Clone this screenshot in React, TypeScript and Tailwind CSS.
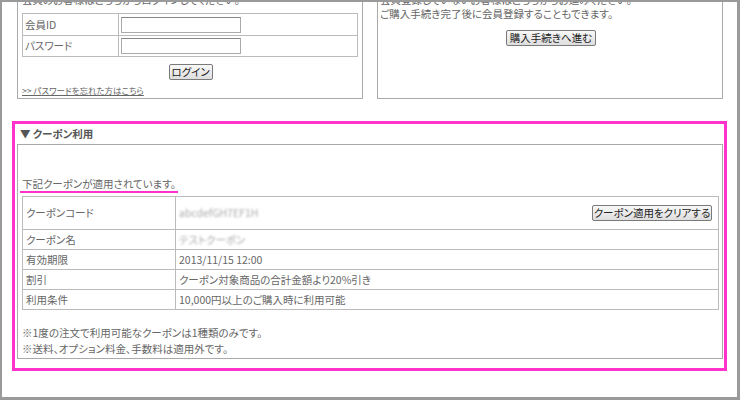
import React from "react";

const font = "font-['Noto_Sans_CJK_JP','Noto_Sans',sans-serif] [font-feature-settings:'palt']";

const OldButton = ({ label, className }: { label: string; className?: string }) => (
    <button className={`h-[16px] leading-[14px] border border-[#7a7a7a] rounded-[2px] bg-gradient-to-b from-[#f8f8f8] to-[#dedede] text-[10.5px] text-[#222] ${className ?? ""}`}>
        {label}
    </button>
);

const LoginBox = () => (
    <div className="w-[346px] h-[120px] border border-[#aaa] pl-[4px] pr-[3px] pt-[13px]">
        <p className="text-[10.5px] leading-[14px] text-[#666]">会員のお客様はこちらからログインしてください。</p>
        <table className="mt-[6px] w-[336px] border-collapse border border-[#aaa] text-[10.5px] text-[#666]">
            <tbody>
                <tr className="h-[22px]">
                    <td className="w-[96px] border border-[#bbb] pl-[2px]">会員ID</td>
                    <td className="border border-[#bbb] pl-[2px]">
                        <div className="w-[120px] h-[16px] border border-[#aaa] border-t-[#888] bg-white" />
                    </td>
                </tr>
                <tr className="h-[21px]">
                    <td className="border border-[#bbb] pl-[2px]">パスワード</td>
                    <td className="border border-[#bbb] pl-[2px]">
                        <div className="w-[120px] h-[16px] border border-[#aaa] border-t-[#888] bg-white" />
                    </td>
                </tr>
            </tbody>
        </table>
        <div className="flex justify-center mt-[7px]">
            <OldButton label="ログイン" className="w-[44px] h-[15px]" />
        </div>
        <a className="block mt-[4px] text-[8.5px] leading-[12px] text-[#666] underline">&gt;&gt; パスワードを忘れた方はこちら</a>
    </div>
);

const GuestBox = () => (
    <div className="w-[346px] h-[120px] border border-[#aaa] pl-[2px] pt-[13px]">
        <p className="text-[10.5px] leading-[14px] text-[#666]">会員登録していないお客様はこちらからお進みください。</p>
        <p className="text-[10.5px] leading-[14px] text-[#666]">ご購入手続き完了後に会員登録することもできます。</p>
        <div className="flex justify-center mt-[9px]">
            <OldButton label="購入手続きへ進む" className="w-[90px]" />
        </div>
    </div>
);

const couponRows = [
    { label: "クーポン名", value: <span className="blur-[1px] text-[#aaa]">テストクーポン</span> },
    { label: "有効期限", value: "2013/11/15 12:00" },
    { label: "割引", value: "クーポン対象商品の合計金額より20%引き" },
    { label: "利用条件", value: "10,000円以上のご購入時に利用可能" },
];

const CouponSection = () => (
    <div className="ml-[10px] mt-[22px] w-[715px] h-[250px] border-[3px] border-[#ff33cc] pl-[2px]">
        <h3 className="h-[20px] pl-[3px] pt-[2px] text-[10.5px] leading-[16px] font-bold text-[#555]">▼ クーポン利用</h3>
        <div className="w-[706px] h-[215px] border border-[#aaa] pl-[4px] pr-[3px] pt-[32px]">
            <p className="text-[10.5px] leading-[14px] text-[#666]">
                <span className="inline-block -ml-[2px] px-[2px] border-b-2 border-[#ff33cc]">下記クーポンが適用されています。</span>
            </p>
            <table className="mt-[3px] w-[697px] border-collapse border border-[#aaa] text-[10.5px] text-[#666]">
                <tbody>
                    <tr className="h-[33px]">
                        <td className="w-[153px] border border-[#bbb] pl-[3px]">クーポンコード</td>
                        <td className="border border-[#bbb] pl-[3px] pr-[6px]">
                            <div className="flex items-center justify-between">
                                <span className="blur-[1px] text-[#aaa]">abcdefGH7EF1H</span>
                                <OldButton label="クーポン適用をクリアする" className="w-[120px]" />
                            </div>
                        </td>
                    </tr>
                    {couponRows.map((row) => (
                        <tr key={row.label} className="h-[20px]">
                            <td className="border border-[#bbb] pl-[3px]">{row.label}</td>
                            <td className="border border-[#bbb] pl-[3px]">{row.value}</td>
                        </tr>
                    ))}
                </tbody>
            </table>
            <div className="mt-[15px] text-[10.5px] leading-[16px] text-[#666]">
                <p>※1度の注文で利用可能なクーポンは1種類のみです。</p>
                <p>※送料、オプション料金、手数料は適用外です。</p>
            </div>
        </div>
    </div>
);

export default function App() {
    return (
        <div className={`w-[740px] h-[400px] overflow-hidden bg-white border-l-2 border-t-2 border-r-[3px] border-b-[3px] border-[#9a9a9a] ${font}`}>
            <div className="flex gap-[14px] pl-[15px] -mt-[23px]">
                <LoginBox />
                <GuestBox />
            </div>
            <CouponSection />
        </div>
    );
}
